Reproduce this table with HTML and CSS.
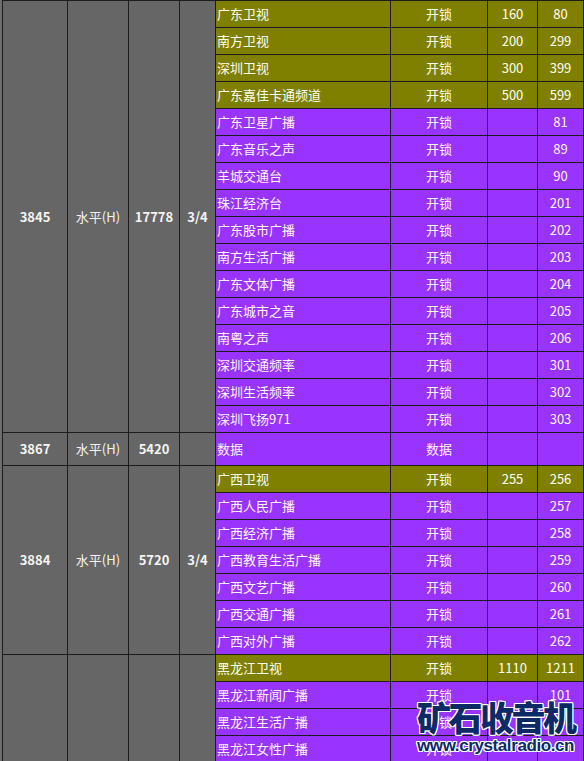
FILE: index.html
```html
<!DOCTYPE html>
<html lang="zh-CN">
<head>
<meta charset="utf-8">
<title>频道表</title>
<link rel="stylesheet" href="styles.css">
</head>
<body>
<div class="page">
<table class="grid">
  <colgroup>
    <col class="c1"><col class="c2"><col class="c3"><col class="c4"><col class="c5"><col class="c6"><col class="c7"><col class="c8">
  </colgroup>
  <tbody>
    <tr class="ol"><td class="g b" rowspan="16">3845</td><td class="g" rowspan="16">水平(H)</td><td class="g b" rowspan="16">17778</td><td class="g b" rowspan="16">3/4</td><td class="nm">广东卫视</td><td>开锁</td><td>160</td><td>80</td></tr>
    <tr class="ol"><td class="nm">南方卫视</td><td>开锁</td><td>200</td><td>299</td></tr>
    <tr class="ol"><td class="nm">深圳卫视</td><td>开锁</td><td>300</td><td>399</td></tr>
    <tr class="ol"><td class="nm">广东嘉佳卡通频道</td><td>开锁</td><td>500</td><td>599</td></tr>
    <tr class="pu"><td class="nm">广东卫星广播</td><td>开锁</td><td></td><td>81</td></tr>
    <tr class="pu"><td class="nm">广东音乐之声</td><td>开锁</td><td></td><td>89</td></tr>
    <tr class="pu"><td class="nm">羊城交通台</td><td>开锁</td><td></td><td>90</td></tr>
    <tr class="pu"><td class="nm">珠江经济台</td><td>开锁</td><td></td><td>201</td></tr>
    <tr class="pu"><td class="nm">广东股市广播</td><td>开锁</td><td></td><td>202</td></tr>
    <tr class="pu"><td class="nm">南方生活广播</td><td>开锁</td><td></td><td>203</td></tr>
    <tr class="pu"><td class="nm">广东文体广播</td><td>开锁</td><td></td><td>204</td></tr>
    <tr class="pu"><td class="nm">广东城市之音</td><td>开锁</td><td></td><td>205</td></tr>
    <tr class="pu"><td class="nm">南粤之声</td><td>开锁</td><td></td><td>206</td></tr>
    <tr class="pu"><td class="nm">深圳交通频率</td><td>开锁</td><td></td><td>301</td></tr>
    <tr class="pu"><td class="nm">深圳生活频率</td><td>开锁</td><td></td><td>302</td></tr>
    <tr class="pu"><td class="nm">深圳飞扬971</td><td>开锁</td><td></td><td>303</td></tr>
    <tr class="pu tall"><td class="g b">3867</td><td class="g">水平(H)</td><td class="g b">5420</td><td class="g"></td><td class="nm">数据</td><td>数据</td><td></td><td></td></tr>
    <tr class="ol"><td class="g b" rowspan="7">3884</td><td class="g" rowspan="7">水平(H)</td><td class="g b" rowspan="7">5720</td><td class="g b" rowspan="7">3/4</td><td class="nm">广西卫视</td><td>开锁</td><td>255</td><td>256</td></tr>
    <tr class="pu"><td class="nm">广西人民广播</td><td>开锁</td><td></td><td>257</td></tr>
    <tr class="pu"><td class="nm">广西经济广播</td><td>开锁</td><td></td><td>258</td></tr>
    <tr class="pu"><td class="nm">广西教育生活广播</td><td>开锁</td><td></td><td>259</td></tr>
    <tr class="pu"><td class="nm">广西文艺广播</td><td>开锁</td><td></td><td>260</td></tr>
    <tr class="pu"><td class="nm">广西交通广播</td><td>开锁</td><td></td><td>261</td></tr>
    <tr class="pu"><td class="nm">广西对外广播</td><td>开锁</td><td></td><td>262</td></tr>
    <tr class="ol"><td class="g" rowspan="4"></td><td class="g" rowspan="4"></td><td class="g" rowspan="4"></td><td class="g" rowspan="4"></td><td class="nm">黑龙江卫视</td><td>开锁</td><td>1110</td><td>1211</td></tr>
    <tr class="pu"><td class="nm">黑龙江新闻广播</td><td>开锁</td><td></td><td>101</td></tr>
    <tr class="pu"><td class="nm">黑龙江生活广播</td><td>开锁</td><td></td><td></td></tr>
    <tr class="pu"><td class="nm">黑龙江女性广播</td><td>开锁</td><td></td><td></td></tr>
  </tbody>
</table>
<div class="mark">
  <div class="mark-cn">矿石收音机</div>
  <div class="mark-url">www.crystalradio.cn</div>
</div>
</div>
</body>
</html>
```

FILE: styles.css
```css
html, body {
  margin: 0;
  padding: 0;
  background: #6e6e6e;
  overflow: hidden;
}
.page {
  position: relative;
  width: 584px;
  height: 761px;
  overflow: hidden;
  padding-left: 2px;
  box-sizing: border-box;
}
.grid {
  border-collapse: separate;
  border-spacing: 0;
  table-layout: fixed;
  width: 582px;
  border-left: 1px solid #1c1c1c;
  border-top: 1px solid #1c1c1c;
  font-family: "Noto Sans CJK SC", "Noto Sans", sans-serif;
  font-size: 13px;
  color: #fff;
}
.c1 { width: 65px; }
.c2 { width: 61px; }
.c3 { width: 51px; }
.c4 { width: 36px; }
.c5 { width: 175px; }
.c6 { width: 97px; }
.c7 { width: 50px; }
.c8 { width: 46px; }
.grid td {
  box-sizing: border-box;
  height: 27px;
  padding: 0;
  border-right: 1px solid #1c1c1c;
  border-bottom: 1px solid #1c1c1c;
  text-align: center;
  vertical-align: middle;
  line-height: 16px;
  white-space: nowrap;
  overflow: hidden;
}
.grid tr.tall td { height: 33px; }
.ol td { background: #808000; color: #fffff0; }
.pu td { background: #9933ff; color: #fff4ff; }
.grid td.g { background: #666666; color: #f4f4f4; }
.grid td.b { font-weight: bold; }
.grid td.nm { text-align: left; padding-left: 1px; }

.mark {
  position: absolute;
  left: 417px;
  top: 697px;
  width: 162px;
  color: #0c2a66;
  text-shadow:
    1px 0 0 #fff, -1px 0 0 #fff, 0 1px 0 #fff, 0 -1px 0 #fff,
    1px 1px 0 #fff, -1px -1px 0 #fff, 1px -1px 0 #fff, -1px 1px 0 #fff;
}
.mark-cn {
  font-family: "Noto Sans CJK SC", sans-serif;
  font-weight: 900;
  font-size: 34px;
  line-height: 40px;
  letter-spacing: -2.5px;
  white-space: nowrap;
}
.mark-url {
  font-family: "Liberation Sans", Arial, sans-serif;
  font-weight: bold;
  font-size: 17px;
  line-height: 18px;
  letter-spacing: -0.4px;
  white-space: nowrap;
}
```
